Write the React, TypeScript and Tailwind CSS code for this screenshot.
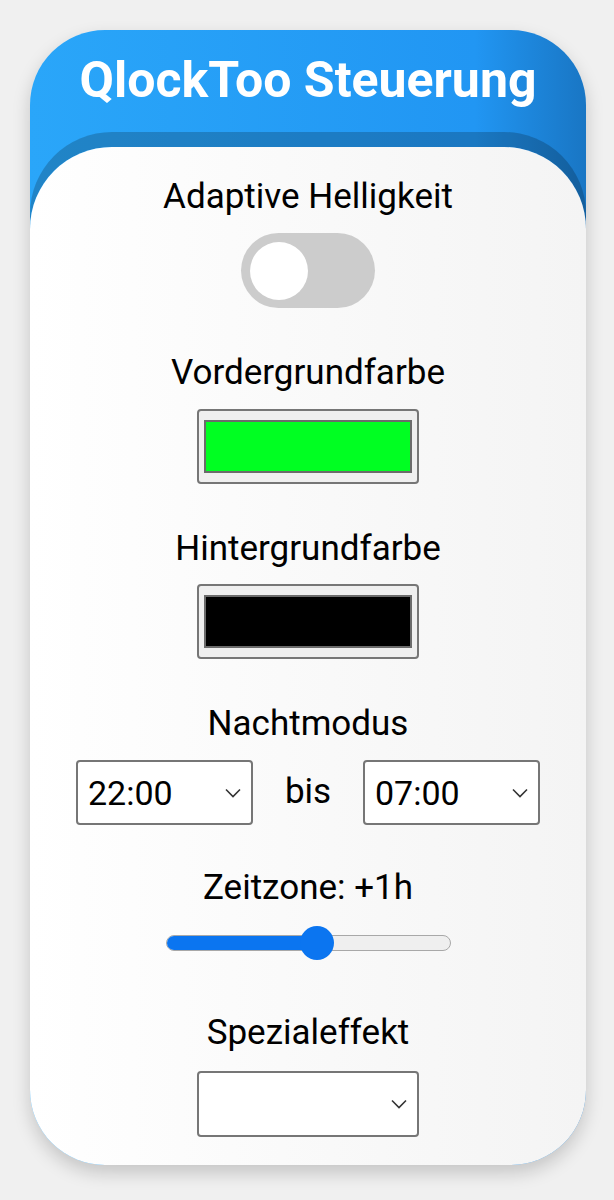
import React from "react";

const FONT = "font-['Roboto',_'Noto_Sans',_sans-serif]";

function Label({ children, className = "" }: { children: React.ReactNode; className?: string }) {
  return (
    <div className={`text-[35px] leading-[40px] text-black text-center ${className}`}>
      {children}
    </div>
  );
}

function Chevron() {
  return (
    <svg width="16" height="10" viewBox="0 0 16 10" fill="none" className="shrink-0">
      <path d="M1 1.5 L8 8.5 L15 1.5" stroke="#333" strokeWidth="1.6" />
    </svg>
  );
}

function SelectBox({ value, className = "" }: { value?: string; className?: string }) {
  return (
    <div
      className={`flex items-center justify-between rounded-[4px] border-2 border-[#767676] bg-white pl-[10px] pr-[10px] ${className}`}
    >
      <span className="text-[34px] leading-none text-black">{value}</span>
      <Chevron />
    </div>
  );
}

function ColorSwatch({ color }: { color: string }) {
  return (
    <div className="w-[222px] h-[75px] rounded-[4px] border-2 border-[#767676] bg-[#efefef] px-[5px] py-[9px]">
      <div className="w-full h-full border-2 border-[#6b6b6b]" style={{ backgroundColor: color }} />
    </div>
  );
}

export default function App() {
  const sliderPct = 53;

  return (
    <div className={`min-h-[1200px] bg-[#f0f0f0] pl-[30px] pt-[30px] ${FONT}`}>
      <div className="w-[556px] rounded-[75px] overflow-hidden bg-gradient-to-r from-[#2aa6f9] via-[#2196f3] via-80% to-[#1976c4] shadow-[0_8px_18px_rgba(0,0,0,0.18)]">
        <div className="h-[117px] flex justify-center pt-[20px]">
          <h1 className="text-[50px] leading-[60px] font-bold text-white">
            QlockToo Steuerung
          </h1>
        </div>
        <div className="rounded-t-[82px] bg-gradient-to-r from-white to-[#f4f4f4] shadow-[0_-15px_0_0_rgba(0,0,0,0.2)] flex flex-col items-center pt-[30px] pb-[28px]">
          <Label>Adaptive Helligkeit</Label>
          <div className="mt-[16px] w-[134px] h-[75px] rounded-full bg-[#cccccc] flex items-center pl-[9px]">
            <div className="w-[58px] h-[58px] rounded-full bg-white" />
          </div>

          <Label className="mt-[45px]">Vordergrundfarbe</Label>
          <div className="mt-[16px]">
            <ColorSwatch color="#00ff22" />
          </div>

          <Label className="mt-[45px]">Hintergrundfarbe</Label>
          <div className="mt-[15px]">
            <ColorSwatch color="#000000" />
          </div>

          <Label className="mt-[45px]">Nachtmodus</Label>
          <div className="mt-[16px] flex items-center w-[464px] justify-between">
            <SelectBox value="22:00" className="w-[177px] h-[65px]" />
            <span className="text-[35px] leading-none text-black pb-[2px]">bis</span>
            <SelectBox value="07:00" className="w-[177px] h-[65px]" />
          </div>

          <Label className="mt-[43px]">Zeitzone: +1h</Label>
          <div className="mt-[18px] relative w-[285px] h-[34px] flex items-center">
            <div className="w-full h-[16px] rounded-full bg-[#efefef] border border-[#a8a8a8] overflow-hidden">
              <div className="h-full bg-[#0b75f0]" style={{ width: `${sliderPct}%` }} />
            </div>
            <div
              className="absolute top-0 w-[34px] h-[34px] rounded-full bg-[#0b75f0] -translate-x-1/2"
              style={{ left: `${sliderPct}%` }}
            />
          </div>

          <Label className="mt-[53px]">Spezialeffekt</Label>
          <SelectBox className="mt-[18px] w-[222px] h-[66px]" />
        </div>
      </div>
    </div>
  );
}
